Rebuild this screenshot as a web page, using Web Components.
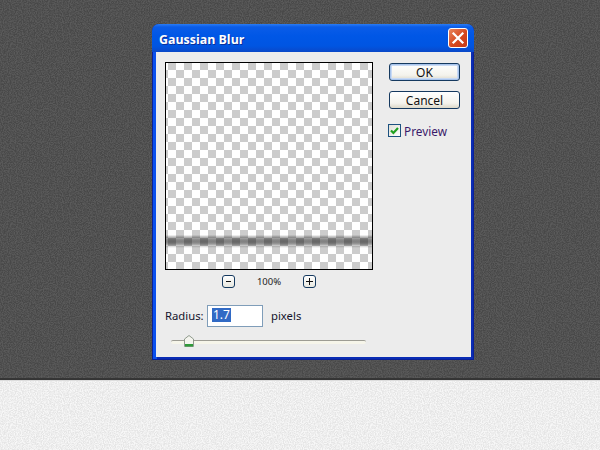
<!DOCTYPE html>
<html>
<head>
<meta charset="utf-8">
<title>Gaussian Blur</title>
<style>
  html, body { margin: 0; padding: 0; }
  body { width: 600px; height: 450px; overflow: hidden; font-family: "Noto Sans", "Liberation Sans", sans-serif; }
</style>
</head>
<body>
<fx-scene>
  <fx-dialog heading="Gaussian Blur">
    <fx-preview slot="preview"></fx-preview>
    <fx-zoom slot="zoom" value="100%"></fx-zoom>
    <fx-radius slot="radius" value="1.7" unit="pixels"></fx-radius>
    <fx-slider slot="slider" position="17"></fx-slider>
    <fx-button slot="actions" primary>OK</fx-button>
    <fx-button slot="actions">Cancel</fx-button>
    <fx-check slot="actions" checked>Preview</fx-check>
  </fx-dialog>
</fx-scene>

<script>
// noise tile shared by the two halves of the backdrop
const noise = (amount) => {
  const svg = `<svg xmlns='http://www.w3.org/2000/svg' width='180' height='180'><filter id='n' x='0' y='0' width='100%' height='100%' color-interpolation-filters='sRGB'><feTurbulence type='fractalNoise' baseFrequency='.85' numOctaves='2' seed='4' stitchTiles='stitch'/><feColorMatrix values='3 0 0 0 -1 3 0 0 0 -1 3 0 0 0 -1 0 0 0 0 ${amount}'/></filter><rect width='180' height='180' filter='url(#n)'/></svg>`;
  return `url("data:image/svg+xml,${encodeURIComponent(svg)}")`;
};

class FxScene extends HTMLElement {
  constructor() {
    super();
    this.attachShadow({ mode: 'open' }).innerHTML = `
      <style>
        :host { display: flex; flex-direction: column; width: 600px; height: 450px; }
        .wall {
          height: 378px;
          box-sizing: border-box;
          padding: 24px 0 0 152px;
          background: ${noise(0.07)}, #4e4e4e;
        }
        .edge { height: 2px; background: #353535; }
        .floor {
          flex: 1;
          border-top: 1px solid #dcdcdc;
          background: ${noise(0.07)}, #f6f6f6;
        }
      </style>
      <div class="wall"><slot></slot></div>
      <div class="edge"></div>
      <div class="floor"></div>
    `;
  }
}

class FxDialog extends HTMLElement {
  constructor() {
    super();
    this.attachShadow({ mode: 'open' }).innerHTML = `
      <style>
        :host {
          display: flex;
          flex-direction: column;
          width: 322px;
          height: 336px;
          box-sizing: border-box;
          border-radius: 7px 7px 0 0;
          background: linear-gradient(90deg, #0a50ee 4px, #0a2cb4 4px);
          border: solid #0a2098;
          border-width: 0 1px 1px 1px;
          font: 11.3px "Noto Sans", "Liberation Sans", sans-serif;
          color: #14142c;
        }
        .bar {
          flex: none;
          display: flex;
          align-items: center;
          justify-content: space-between;
          height: 28px;
          padding: 0 6px 0 7px;
          margin: 0 -1px;
          box-sizing: border-box;
          border-radius: 7px 7px 0 0;
          background: linear-gradient(#2a7cf4 0, #0a5ce8 3px, #0057e6 12px, #0055e2 22px, #0a48c8 28px);
        }
        h1 {
          margin: 2px 0 0;
          font: bold 12.4px "Open Sans", "Noto Sans", sans-serif;
          color: #fff;
          text-shadow: 1px 1px 0 #0a2f9a;
        }
        .close {
          width: 20px;
          height: 20px;
          box-sizing: border-box;
          border: 1px solid #fff;
          border-radius: 3px;
          background: linear-gradient(135deg, #e8865e, #d6481f 55%, #c43a18);
        }
        .close svg { display: block; }
        .client {
          flex: 1;
          margin: 0 2px 2px 3px;
          background: #ececec;
          display: grid;
          grid-template-columns: 207px 71px;
          column-gap: 17px;
          justify-content: start;
          padding: 10px 0 0 9px;
          align-content: start;
        }
        .left { display: flex; flex-direction: column; }
        .right { display: flex; flex-direction: column; padding-top: 1px; }
      </style>
      <div class="bar">
        <h1></h1>
        <div class="close">
          <svg width="18" height="18" viewBox="0 0 18 18"><path d="M4.5 4.5 13.5 13.5M13.5 4.5 4.5 13.5" stroke="#fff" stroke-width="2.2" stroke-linecap="square" fill="none"/></svg>
        </div>
      </div>
      <div class="client">
        <div class="left">
          <slot name="preview"></slot>
          <slot name="zoom"></slot>
          <slot name="radius"></slot>
          <slot name="slider"></slot>
        </div>
        <div class="right"><slot name="actions"></slot></div>
      </div>
    `;
    this.shadowRoot.querySelector('h1').textContent = this.getAttribute('heading');
  }
}

class FxPreview extends HTMLElement {
  constructor() {
    super();
    this.attachShadow({ mode: 'open' }).innerHTML = `
      <style>
        :host {
          display: block;
          width: 208px;
          height: 208px;
          box-sizing: border-box;
          border: 1px solid #000;
          background:
            linear-gradient(#fff 172px, #d8d8d8 173px, #a4a4a4 175px, #868686 177px, #808080 179px, #9a9a9a 181px, #d4d4d4 183px, #fff 185px),
            repeating-conic-gradient(#fff 0 25%, #ccc 0 50%) 2px -1px / 16px 16px;
          background-blend-mode: multiply;
        }
      </style>
    `;
  }
}

class FxZoom extends HTMLElement {
  constructor() {
    super();
    this.attachShadow({ mode: 'open' }).innerHTML = `
      <style>
        :host {
          display: flex;
          align-items: center;
          justify-content: space-between;
          width: 94px;
          height: 13px;
          margin: 5px 0 0 57px;
          font-size: 9.5px;
          color: #1d1d1d;
        }
        b {
          display: flex;
          width: 13px;
          height: 13px;
          box-sizing: border-box;
          border: 1px solid #15395f;
          border-radius: 3px;
          background: linear-gradient(#fff, #e8e8e0);
          align-items: center;
          justify-content: center;
        }
        svg { display: block; }
      </style>
      <b><svg width="7" height="7"><path d="M1 3.5H6" stroke="#111" stroke-width="1"/></svg></b>
      <span></span>
      <b><svg width="7" height="7"><path d="M0 3.5H7M3.5 0V7" stroke="#111" stroke-width="1"/></svg></b>
    `;
    this.shadowRoot.querySelector('span').textContent = this.getAttribute('value');
  }
}

class FxRadius extends HTMLElement {
  constructor() {
    super();
    this.attachShadow({ mode: 'open' }).innerHTML = `
      <style>
        :host { display: flex; align-items: center; margin-top: 17px; height: 22px; }
        label { width: 42px; margin-top: -2px; }
        .field {
          width: 56px;
          height: 22px;
          box-sizing: border-box;
          border: 1px solid #7f9db9;
          background: #fff;
          padding: 2px 0 0 4px;
          line-height: 14px;
        }
        .field span { display: inline-block; background: #316ac5; color: #fff; padding: 0 1px; font-size: 12px; }
        .unit { margin: -2px 0 0 8px; }
      </style>
      <label>Radius:</label>
      <div class="field"><span></span></div>
      <span class="unit"></span>
    `;
    this.shadowRoot.querySelector('.field span').textContent = this.getAttribute('value');
    this.shadowRoot.querySelector('.unit').textContent = this.getAttribute('unit');
  }
}

class FxSlider extends HTMLElement {
  constructor() {
    super();
    this.attachShadow({ mode: 'open' }).innerHTML = `
      <style>
        :host { display: block; position: relative; width: 195px; height: 12px; margin: 8px 0 0 6px; }
        .track { position: relative; top: 5px; height: 4px; box-sizing: border-box; background: #f6f5ea; border-top: 1px solid #9d9c94; border-radius: 2px; }
        svg { position: absolute; top: 0; display: block; }
      </style>
      <div class="track"></div>
      <svg width="10" height="12" viewBox="0 0 10 12">
        <path d="M.5 4 5 .5 9.5 4V11.5H.5Z" fill="#f4f4ee" stroke="#8f9a8d"/>
        <path d="M1 9H9V11.5H1Z" fill="#2f9a3a"/>
      </svg>
    `;
    this.shadowRoot.querySelector('svg').style.left = this.getAttribute('position') - 4 + 'px';
  }
}

class FxButton extends HTMLElement {
  constructor() {
    super();
    this.attachShadow({ mode: 'open' }).innerHTML = `
      <style>
        :host {
          display: flex;
          align-items: center;
          justify-content: center;
          height: 18px;
          margin-bottom: 10px;
          box-sizing: border-box;
          border: 1px solid #15395f;
          border-radius: 3px;
          font-size: 12px;
          color: #111;
          background: linear-gradient(#fff, #f4f3ec 70%, #dcd8c8);
        }
        :host([primary]) {
          box-shadow: inset 0 0 0 1px #a8c4ec, inset 0 0 0 2px #c9daf4;
        }
      </style>
      <slot></slot>
    `;
  }
}

class FxCheck extends HTMLElement {
  constructor() {
    super();
    this.attachShadow({ mode: 'open' }).innerHTML = `
      <style>
        :host { display: flex; align-items: center; gap: 3px; margin: 5px 0 0 -1px; height: 13px; font-size: 11.8px; color: #3a1a6a; }
        i {
          display: block;
          width: 13px;
          height: 13px;
          box-sizing: border-box;
          border: 1px solid #1c5180;
          background: linear-gradient(135deg, #e0dfd6, #fff);
        }
        svg { display: block; }
      </style>
      <i><svg width="11" height="11" viewBox="0 0 11 11"><path d="M2 5.5 4.4 8 9 3" fill="none" stroke="#21a121" stroke-width="2.2"/></svg></i>
      <slot></slot>
    `;
  }
}

customElements.define('fx-scene', FxScene);
customElements.define('fx-dialog', FxDialog);
customElements.define('fx-preview', FxPreview);
customElements.define('fx-zoom', FxZoom);
customElements.define('fx-radius', FxRadius);
customElements.define('fx-slider', FxSlider);
customElements.define('fx-button', FxButton);
customElements.define('fx-check', FxCheck);
</script>
</body>
</html>
